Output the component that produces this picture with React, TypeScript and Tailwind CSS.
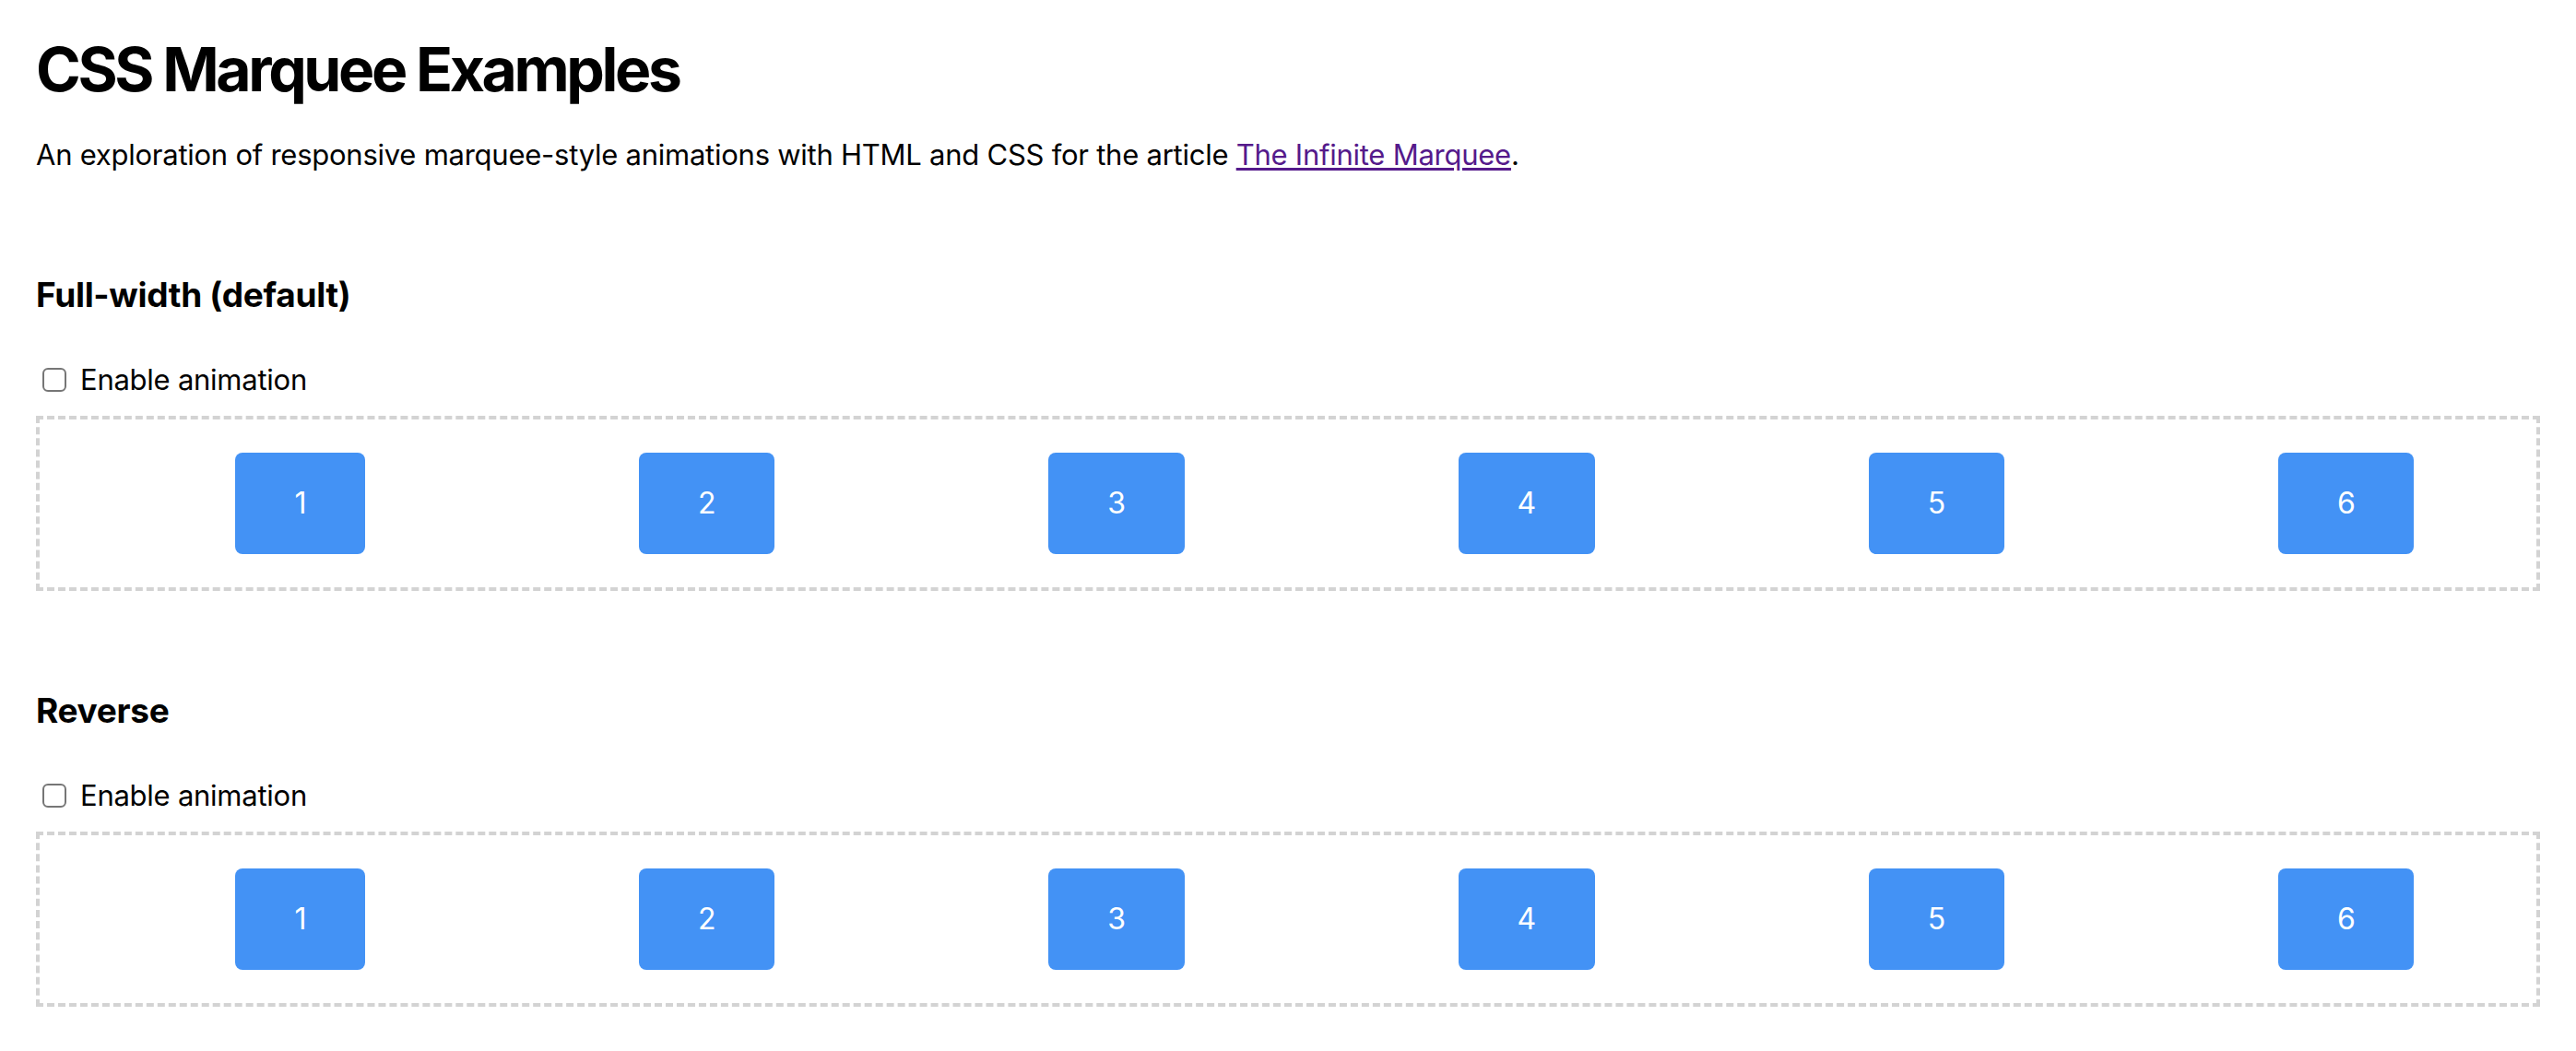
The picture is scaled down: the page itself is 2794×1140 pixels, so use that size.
const items = [1, 2, 3, 4, 5, 6]

function Marquee() {
  return (
    <div className="flex overflow-hidden gap-[32px] border-[4px] border-dashed border-[#d3d3d3]">
      <ul className="flex shrink-0 justify-around gap-[32px] min-w-full my-[32px] pl-[80px] list-none">
        {items.map((n) => (
          <li
            key={n}
            className="flex-none m-[4px] px-[64px] py-[32px] text-[32px] leading-[46px] rounded-[8px] bg-[#4392f5] text-white text-center"
          >
            {n}
          </li>
        ))}
      </ul>
    </div>
  )
}

function Section({ title }: { title: string }) {
  return (
    <section>
      <h2 className="text-[37px] leading-[44px] font-bold tracking-[-0.3px]">{title}</h2>
      <label className="mt-[46px] flex items-center h-[48px]">
        <input
          type="checkbox"
          className="ml-[7px] appearance-none w-[26px] h-[26px] border-[2px] border-[#767676] rounded-[6px] bg-white"
        />
        <span className="ml-[15px]">Enable animation</span>
      </label>
      <div className="mt-[15px]">
        <Marquee />
      </div>
    </section>
  )
}

export default function App() {
  return (
    <div className="min-h-screen bg-white text-black px-[39px] pt-[35px] text-[31px] leading-[48px] tracking-[-0.25px] font-['Inter',sans-serif]">
      <h1 className="text-[66px] leading-[80px] font-bold tracking-[-3.4px]">CSS Marquee Examples</h1>
      <p className="mt-[29px]">
        An exploration of responsive marquee-style animations with HTML and CSS for the article{' '}
        <a href="#" className="text-[#551a8b] underline decoration-[3px] underline-offset-[3px]">
          The Infinite Marquee
        </a>
        .
      </p>
      <div className="mt-[106px]">
        <Section title="Full-width (default)" />
      </div>
      <div className="mt-[108px]">
        <Section title="Reverse" />
      </div>
    </div>
  )
}
